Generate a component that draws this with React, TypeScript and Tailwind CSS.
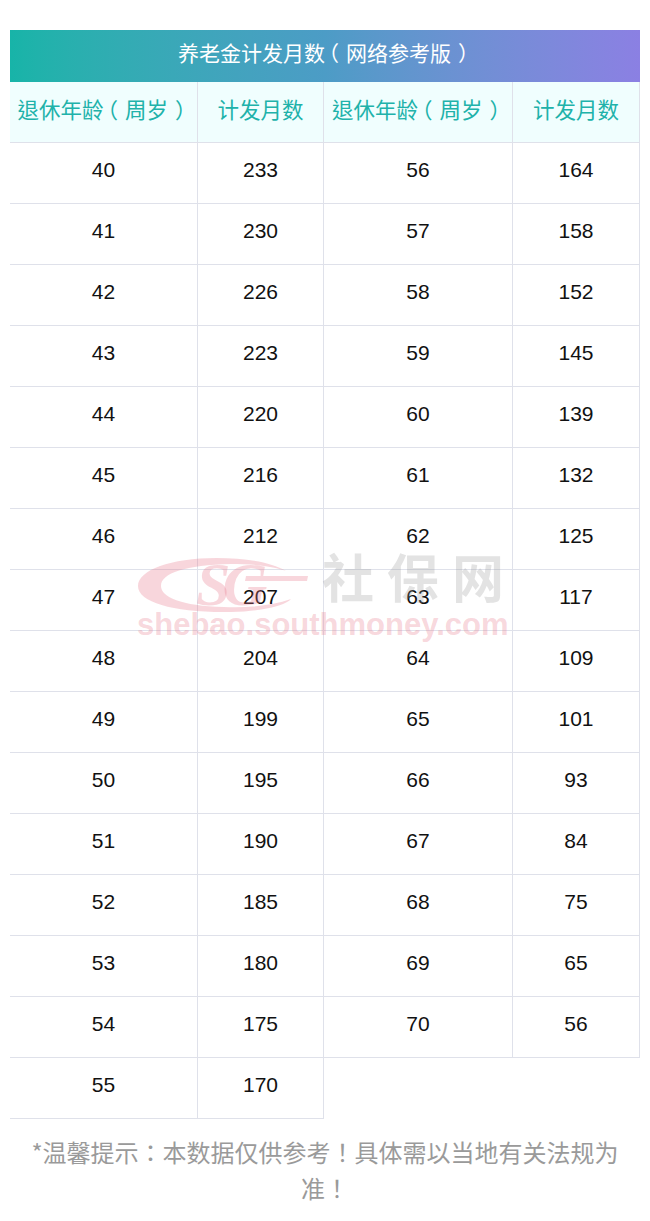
import React from "react";

const left: [string, string][] = [
  ["40", "233"], ["41", "230"], ["42", "226"], ["43", "223"], ["44", "220"], ["45", "216"],
  ["46", "212"], ["47", "207"], ["48", "204"], ["49", "199"], ["50", "195"], ["51", "190"],
  ["52", "185"], ["53", "180"], ["54", "175"], ["55", "170"],
];
const right: [string, string][] = [
  ["56", "164"], ["57", "158"], ["58", "152"], ["59", "145"], ["60", "139"], ["61", "132"],
  ["62", "125"], ["63", "117"], ["64", "109"], ["65", "101"], ["66", "93"], ["67", "84"],
  ["68", "75"], ["69", "65"], ["70", "56"],
];

const cjk = { fontFamily: '"Noto Sans CJK TC", "Noto Sans CJK SC", "Noto Sans", sans-serif' };
const num = { fontFamily: '"Liberation Sans", Arial, sans-serif' };

function Open() {
  return <span className="relative left-[-7px]">（</span>;
}
function Close() {
  return <span className="relative left-[7px]">）</span>;
}

function Table({ rows, w1, w2 }: { rows: [string, string][]; w1: string; w2: string }) {
  return (
    <div className="flex flex-col">
      <div className="flex bg-[#f0fefe] text-[#20b2aa] text-[21.5px]" style={cjk}>
        <div className={`${w1} h-[61px] pb-[6px] flex items-center justify-center border-b border-r border-[#dfe1ea]`}>
          <span>
            退休年龄<Open />周岁<Close />
          </span>
        </div>
        <div className={`${w2} h-[61px] pb-[6px] flex items-center justify-center border-b border-r border-[#dfe1ea]`}>
          计发月数
        </div>
      </div>
      {rows.map(([a, b]) => (
        <div key={a} className="flex text-[21px] text-[#111]" style={num}>
          <div className={`${w1} h-[61px] pb-[6px] flex items-center justify-center border-b border-r border-[#dfe1ea]`}>{a}</div>
          <div className={`${w2} h-[61px] pb-[6px] flex items-center justify-center border-b border-r border-[#dfe1ea]`}>{b}</div>
        </div>
      ))}
    </div>
  );
}

export default function App() {
  return (
    <div className="relative w-[650px] min-h-[1221px] bg-white pt-[30px] px-[10px]">
      <div
        className="h-[52px] pb-[6px] flex items-center justify-center text-white text-[21px] bg-gradient-to-r from-[#17b4a8] via-[#4c9cc6] to-[#8b80e3]"
        style={cjk}
      >
        <span>
          养老金计发月数<Open />网络参考版<Close />
        </span>
      </div>
      <div className="flex items-start">
        <Table rows={left} w1="w-[188px]" w2="w-[126px]" />
        <Table rows={right} w1="w-[189px]" w2="w-[127px]" />
      </div>
      <div
        className="mt-[15px] px-[15px] text-center text-[24px] leading-[36px] text-[#9a9a9a]"
        style={cjk}
      >
        *温馨提示：本数据仅供参考！具体需以当地有关法规为准！
      </div>

      {/* watermark */}
      <div className="pointer-events-none absolute left-0 top-0 w-full h-full">
        <svg className="absolute left-[136px] top-[555px]" width="175" height="60" viewBox="0 0 175 60">
          <path
            d="M80 3 C35 3 2 15 2 31 C2 48 40 58 95 57 C130 56 150 50 155 44 C135 51 110 53 88 52 C45 51 25 42 25 31 C25 18 50 10 95 9 C120 9 140 12 150 16 C135 7 110 3 80 3 Z"
            fill="rgba(232,120,140,0.3)"
          />
          <path d="M110 21 L172 21 L171 26 L109 26 Z" fill="rgba(232,120,140,0.3)" />
        </svg>
        <div
          className="absolute left-[196px] top-[553px] text-[62px] font-bold italic leading-none text-[rgba(232,120,140,0.3)] tracking-[-8px]"
          style={{ fontFamily: '"Liberation Serif", serif' }}
        >
          SG
        </div>
        <div
          className="absolute left-[322px] top-[550px] text-[52px] font-bold leading-none tracking-[13px] text-[rgba(150,150,150,0.27)]"
          style={cjk}
        >
          社保网
        </div>
        <div
          className="absolute left-[137px] top-[609px] text-[31px] font-bold leading-none text-[rgba(232,120,140,0.3)]"
          style={num}
        >
          shebao.southmoney.com
        </div>
      </div>
    </div>
  );
}
